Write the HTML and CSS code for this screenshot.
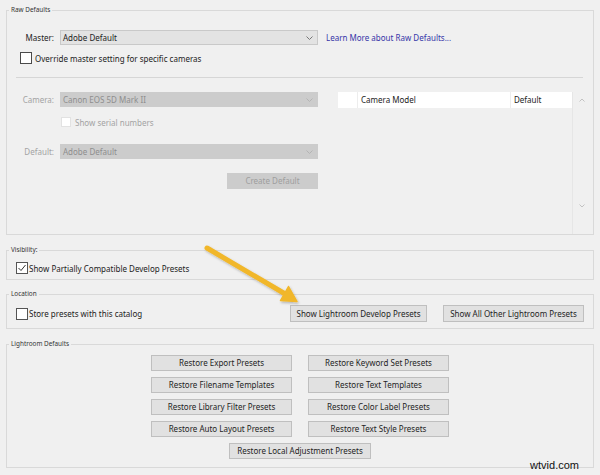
FILE: index.html
```html
<!DOCTYPE html>
<html>
<head>
<meta charset="utf-8">
<link rel="stylesheet" href="styles.css">
</head>
<body>
<div class="dialog">
  <fieldset class="group raw">
    <legend>Raw Defaults</legend>
    <div class="raw-inner">
      <div class="row">
        <span class="field-label">Master:</span>
        <div class="select"><span>Adobe Default</span><svg class="chev" width="7" height="4" viewBox="0 0 7 4"><polyline points="0.5,0.5 3.5,3.5 6.5,0.5" fill="none" stroke="#777" stroke-width="1"/></svg></div>
        <span class="link">Learn More about Raw Defaults...</span>
      </div>
      <div class="check-row override">
        <span class="box"></span><span>Override master setting for specific cameras</span>
      </div>
      <div class="separator"></div>
      <div class="lower">
        <div class="left-col">
          <div class="row">
            <span class="field-label muted">Camera:</span>
            <div class="select disabled"><span>Canon EOS 5D Mark II</span><svg class="chev" width="7" height="4" viewBox="0 0 7 4"><polyline points="0.5,0.5 3.5,3.5 6.5,0.5" fill="none" stroke="#b4b4b4" stroke-width="1"/></svg></div>
          </div>
          <div class="check-row serial">
            <span class="box"></span><span class="muted">Show serial numbers</span>
          </div>
          <div class="row default-row">
            <span class="field-label muted">Default:</span>
            <div class="select disabled"><span>Adobe Default</span><svg class="chev" width="7" height="4" viewBox="0 0 7 4"><polyline points="0.5,0.5 3.5,3.5 6.5,0.5" fill="none" stroke="#b4b4b4" stroke-width="1"/></svg></div>
          </div>
          <div class="create-row"><button class="btn btn-disabled">Create Default</button></div>
        </div>
        <div class="table">
          <div class="thead">
            <div class="c0"></div>
            <div class="c1">Camera Model</div>
            <div class="c2">Default</div>
          </div>
        </div>
        <div class="scrollbar">
          <svg width="6" height="4" viewBox="0 0 6 4"><polyline points="0.5,3.5 3,1 5.5,3.5" fill="none" stroke="#c2c2c2" stroke-width="1"/></svg>
          <svg class="down" width="6" height="4" viewBox="0 0 6 4"><polyline points="0.5,0.5 3,3 5.5,0.5" fill="none" stroke="#c2c2c2" stroke-width="1"/></svg>
        </div>
      </div>
    </div>
  </fieldset>

  <fieldset class="group visibility">
    <legend>Visibility:</legend>
    <div class="vis-inner">
      <div class="check-row vis-row">
        <span class="box checked"><svg width="10" height="10" viewBox="0 0 10 10"><polyline points="1.5,5 4,7.5 8.5,2" fill="none" stroke="#333" stroke-width="1"/></svg></span><span>Show Partially Compatible Develop Presets</span>
      </div>
    </div>
  </fieldset>

  <fieldset class="group location">
    <legend>Location</legend>
    <div class="loc-inner">
      <span class="box loc-box"></span><span>Store presets with this catalog</span>
      <button class="btn btn-dev">Show Lightroom Develop Presets</button>
      <button class="btn btn-other">Show All Other Lightroom Presets</button>
    </div>
  </fieldset>

  <fieldset class="group defaults">
    <legend>Lightroom Defaults</legend>
    <div class="defaults-grid">
      <button class="btn">Restore Export Presets</button>
      <button class="btn">Restore Keyword Set Presets</button>
      <button class="btn">Restore Filename Templates</button>
      <button class="btn">Restore Text Templates</button>
      <button class="btn">Restore Library Filter Presets</button>
      <button class="btn">Restore Color Label Presets</button>
      <button class="btn">Restore Auto Layout Presets</button>
      <button class="btn">Restore Text Style Presets</button>
      <button class="btn wide">Restore Local Adjustment Presets</button>
    </div>
  </fieldset>

  <svg class="arrow" width="600" height="475" viewBox="0 0 600 475">
    <defs>
      <filter id="sh" x="-20%" y="-20%" width="140%" height="140%">
        <feDropShadow dx="1" dy="1.5" stdDeviation="1" flood-color="#000" flood-opacity="0.25"/>
      </filter>
    </defs>
    <g filter="url(#sh)">
      <line x1="207" y1="248" x2="287" y2="295" stroke="#f1b72b" stroke-width="5" stroke-linecap="round"/>
      <polygon points="297,301.5 280.5,300.5 288.5,286.5" fill="#f1b72b" stroke="#f1b72b" stroke-width="1.5" stroke-linejoin="round"/>
    </g>
  </svg>

  <div class="watermark">wtvid.com</div>
</div>
</body>
</html>
```

FILE: styles.css
```css
* { box-sizing: border-box; }

body {
  margin: 0;
  background: #f0f0f0;
  font-family: "Noto Sans", "DejaVu Sans", sans-serif;
  font-size: 8px;
  color: #222;
}

.dialog {
  position: relative;
  width: 600px;
  height: 475px;
  padding: 4px 6px 0;
  overflow: hidden;
}

.group {
  margin: 0;
  padding: 0;
  border: 1px solid #d9d9d9;
  min-width: 0;
}

.group legend {
  font-size: 6.4px;
  line-height: 12px;
  padding: 0 2px;
  margin-left: 2px;
  color: #333;
}

.visibility { margin-top: 9px; }
.location { margin-top: 8px; }
.defaults { margin-top: 9px; }

/* Raw defaults */
.raw-inner {
  padding: 14px 3px 0 9px;
}

.row {
  display: flex;
  align-items: center;
  height: 15px;
}

.field-label {
  width: 38px;
  text-align: right;
  margin-right: 6px;
  flex: none;
}

.muted { color: #a3a3a3; }

.select {
  width: 258px;
  height: 15px;
  flex: none;
  display: flex;
  align-items: center;
  padding-left: 2px;
  background: #e3e3e3;
  border: 1px solid #c9c9c9;
}

.select .chev {
  margin-left: auto;
  margin-right: 4px;
}

.select.disabled {
  background: #cccccc;
  border-color: #cccccc;
  color: #8e8e8e;
}

.link {
  margin-left: 8px;
  color: #3535a8;
}

.check-row {
  display: flex;
  align-items: center;
}

.box {
  width: 12px;
  height: 12px;
  flex: none;
  border: 1px solid #4a4a4a;
  background: #fff;
  margin-right: 3px;
  display: flex;
  align-items: center;
  justify-content: center;
}

.override {
  margin-top: 7px;
  margin-left: 4px;
  height: 12px;
}

.separator {
  margin-top: 13px;
  margin-right: 7px;
  height: 1px;
  background: #d6d6d6;
}

.lower {
  margin-top: 14px;
  height: 142px;
  display: flex;
}

.left-col {
  width: 302px;
  flex: none;
}

.serial {
  margin-top: 10px;
  margin-left: 45px;
  height: 10px;
}

.serial .box {
  width: 10px;
  height: 10px;
  border-color: #e2e2e2;
  margin-right: 4px;
}

.default-row { margin-top: 17px; }

.create-row {
  margin-top: 14px;
  display: flex;
  justify-content: flex-end;
}

.btn {
  font-family: inherit;
  font-size: 8px;
  color: #1e1e1e;
  background: #e1e1e1;
  border: 1px solid #bfbfbf;
  padding: 0;
  margin: 0;
  height: 16px;
  line-height: 14px;
  text-align: center;
  white-space: nowrap;
}

.btn-disabled {
  width: 91px;
  background: #cccccc;
  border-color: #cccccc;
  color: #9e9e9e;
}

.table {
  width: 234px;
  margin-left: 20px;
  flex: none;
}

.thead {
  display: flex;
  height: 16px;
  line-height: 16px;
  background: #fff;
}

.c0 {
  width: 20px;
  border-right: 1px solid #ededed;
}

.c1 {
  width: 153px;
  padding-left: 3px;
  border-right: 1px solid #ededed;
}

.c2 {
  flex: 1;
  padding-left: 3px;
}

.scrollbar {
  width: 18px;
  flex: none;
  border-left: 1px solid #e6e6e6;
  display: flex;
  flex-direction: column;
  align-items: center;
  padding-top: 6px;
}

.scrollbar .down { margin-top: 102px; }

/* Visibility */
.vis-inner {
  padding: 6px 0 5px 9px;
}

.vis-row { height: 12px; }

.vis-row .box {
  margin-right: 1px;
  border-color: #555;
}

/* Location */
.loc-inner {
  display: flex;
  align-items: center;
  height: 28px;
  padding: 5px 9px 6px 9px;
}

.loc-box {
  margin-right: 1px;
  border-color: #555;
}

.btn-dev {
  margin-left: auto;
  width: 137px;
  height: 17px;
  line-height: 15px;
}

.btn-other {
  margin-left: 16px;
  width: 141px;
  height: 17px;
  line-height: 15px;
}

/* Lightroom defaults */
.defaults-grid {
  display: grid;
  grid-template-columns: 141px 141px;
  grid-auto-rows: 16px;
  column-gap: 16px;
  row-gap: 6px;
  justify-content: center;
  padding: 5px 0 8px;
}

.wide {
  grid-column: 1 / -1;
  justify-self: center;
  width: 142px;
}

/* Overlays */
.arrow {
  position: absolute;
  left: 0;
  top: 0;
  pointer-events: none;
}

.watermark {
  position: absolute;
  right: 21px;
  top: 458px;
  font-family: "Liberation Sans", Arial, sans-serif;
  font-size: 11px;
  line-height: 14px;
  color: #111;
}
```
